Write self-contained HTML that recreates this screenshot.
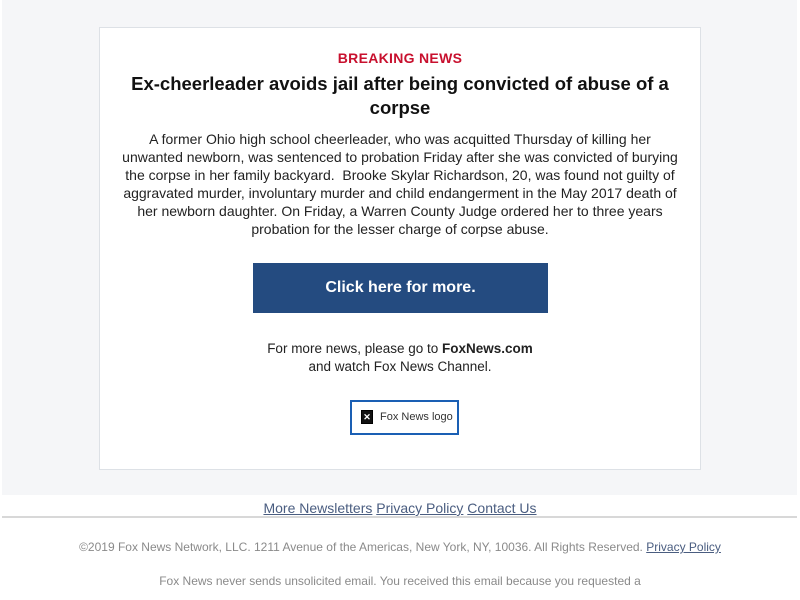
<!DOCTYPE html>
<html><head><meta charset="utf-8"><style>
body{margin:0;width:800px;height:600px;background:#fff;font-family:"Liberation Sans",Arial,sans-serif;overflow:hidden;position:relative}
.bg{position:absolute;left:2px;top:0;width:795px;height:495px;background:#f5f6f8}
.card{position:absolute;left:99px;top:27px;width:600px;height:441px;background:#fff;border:1px solid #dde1e6}
.c{position:absolute;left:0;width:800px;text-align:center;white-space:nowrap}
.bn{top:50px;font-size:14px;font-weight:bold;color:#c8102e;letter-spacing:.3px}
.h{top:72px;font-size:18.5px;font-weight:bold;color:#111;line-height:24px}
.p{top:130px;font-size:14px;color:#222;line-height:18px}
.btn{position:absolute;left:253px;top:263px;width:295px;height:50px;background:#244b80;color:#fff;font-weight:bold;font-size:16px;text-align:center;line-height:50px}
.m{top:340px;font-size:13.5px;color:#222;line-height:18px}
.logo{position:absolute;left:350px;top:400px;width:105px;height:31px;border:2px solid #1a5fb4;font-size:11px;color:#333}
.logo i{position:absolute;left:9px;top:8px;width:10px;height:12px;border:1px solid #000;outline:1px solid #fff;background:#111;color:#fff;font-style:normal;font-size:9px;font-weight:bold;line-height:12px;text-align:center}
.logo span{position:absolute;left:28px;top:9px}
.links{top:500px;font-size:14px;color:#4a5d80}
.links a{color:#4a5d80;text-decoration:underline}
.hr{position:absolute;left:2px;top:516px;width:795px;height:2px;background:#d8d8d8}
.cp{top:540px;font-size:12px;color:#8a8a8a}
.cp a{color:#4a5d80;text-decoration:underline}
.ls{top:574px;font-size:12px;color:#8a8a8a}
</style></head><body>
<div class="bg"></div>
<div class="card"></div>
<div class="c bn">BREAKING NEWS</div>
<div class="c h">Ex-cheerleader avoids jail after being convicted of abuse of a<br>corpse</div>
<div class="c p">A former Ohio high school cheerleader, who was acquitted Thursday of killing her<br>unwanted newborn, was sentenced to probation Friday after she was convicted of burying<br>the corpse in her family backyard.&nbsp; Brooke Skylar Richardson, 20, was found not guilty of<br>aggravated murder, involuntary murder and child endangerment in the May 2017 death of<br>her newborn daughter. On Friday, a Warren County Judge ordered her to three years<br>probation for the lesser charge of corpse abuse.</div>
<div class="btn">Click here for more.</div>
<div class="c m">For more news, please go to <b>FoxNews.com</b><br>and watch Fox News Channel.</div>
<div class="logo"><i>✕</i><span>Fox News logo</span></div>
<div class="c links"><a>More Newsletters</a> <a>Privacy Policy</a> <a>Contact Us</a></div>
<div class="hr"></div>
<div class="c cp">©2019 Fox News Network, LLC. 1211 Avenue of the Americas, New York, NY, 10036. All Rights Reserved. <a>Privacy Policy</a></div>
<div class="c ls">Fox News never sends unsolicited email. You received this email because you requested a</div>
</body></html>
